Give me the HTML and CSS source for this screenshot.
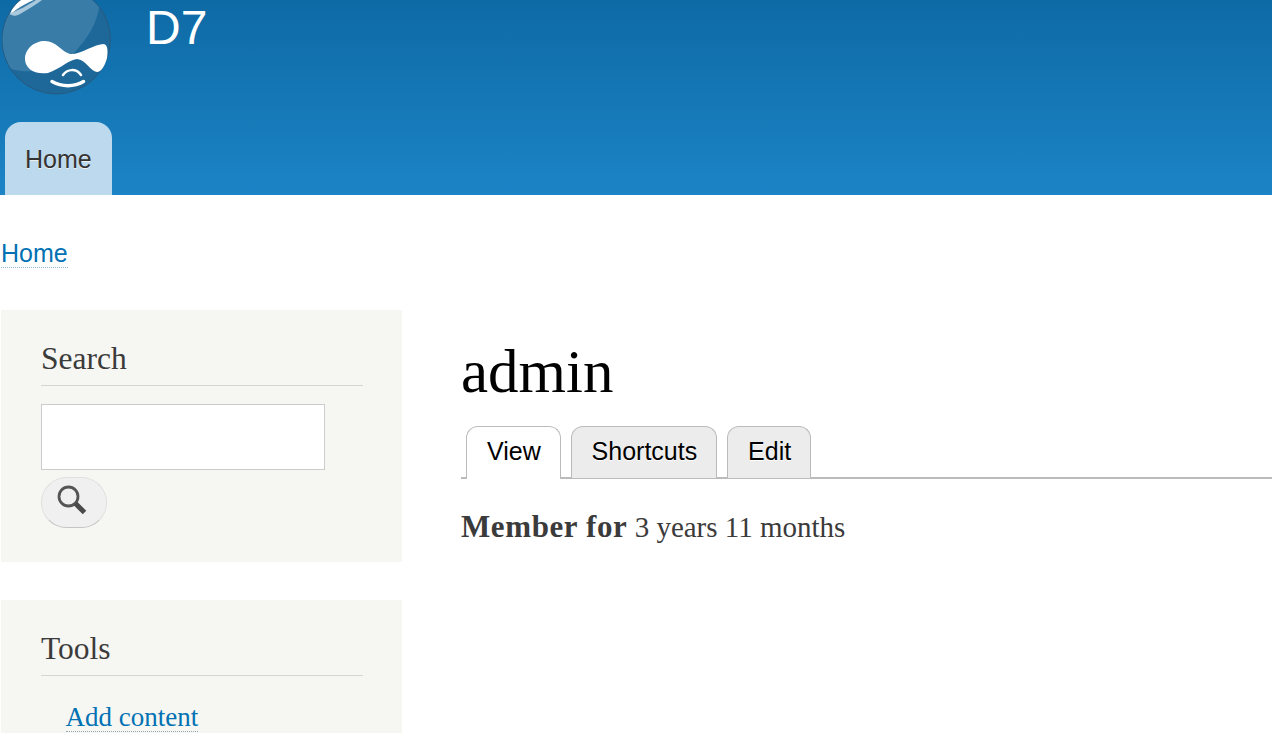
FILE: index.html
```html
<!DOCTYPE html>
<html lang="en">
<head>
  <meta charset="UTF-8">
  <title>admin | D7</title>
  <link rel="stylesheet" href="styles.css">
</head>
<body>
  <header class="site-header">
    <div class="branding">
      <svg class="logo" viewBox="0 0 112 96" width="112" height="96" aria-label="Home">
        <defs>
          <clipPath id="ball"><circle cx="56.200" cy="39.800" r="53.700"/></clipPath>
        </defs>
        <circle cx="56.200" cy="39.800" r="54.200" fill="#1d6898" stroke="#285a80" stroke-width="1"/>
        <g clip-path="url(#ball)">
          <path d="M-2 -20H100C102 12 96 30 72 55C56 69 30 76 8 68C-2 50 -4 20 -2 -20Z" fill="#387ca7"/>
          <path d="M10 15C18 7 32 0 44 -4L32 -6C22 -2 12 6 10 15Z" fill="#fff"/>
          <path d="M10 13C11 16 15 17 20 14C28 9 36 5 42 0L36 0C28 5 18 11 10 13Z" fill="#a9c8dc"/>
        </g>
        <path d="M25 59C25 49 34 41 45 41C56 41 62 52 70 54C80 55 94 44 104 44C108 45 108 52 107 58C105 66 101 72 97 72C90 71 86 60 77 59C68 60 62 68 48 73C34 75 25 68 25 59Z" fill="#fff"/>
        <path d="M52 81.500C62 87 74 87 83.500 81.500" fill="none" stroke="#fff" stroke-width="3.500" stroke-linecap="round"/>
        <path d="M63 75C67 69 76 68 81 75" fill="none" stroke="#fff" stroke-width="2.500" stroke-linecap="round"/>
      </svg>
      <div class="site-name">D7</div>
    </div>
    <nav class="main-menu">
      <a class="main-menu-item" href="#">Home</a>
    </nav>
  </header>

  <div class="breadcrumb"><a href="#">Home</a></div>

  <div class="columns">
    <aside class="sidebar">
      <section class="block block-search">
        <h2>Search</h2>
        <input class="search-input" type="text">
        <button class="search-btn" type="button" aria-label="Search">
          <svg viewBox="0 0 30 30" width="30" height="30">
            <circle cx="11.500" cy="11.500" r="9.500" fill="none" stroke="#555" stroke-width="2.800"/>
            <path d="M18.500 18.500L27.500 27.500" stroke="#4a4a4a" stroke-width="5"/>
          </svg>
        </button>
      </section>
      <section class="block block-tools">
        <h2>Tools</h2>
        <ul class="tools-menu">
          <li><a href="#">Add content</a></li>
        </ul>
      </section>
    </aside>

    <main class="content">
      <h1>admin</h1>
      <ul class="tabs">
        <li><a class="tab active" href="#">View</a></li>
        <li><a class="tab" href="#">Shortcuts</a></li>
        <li><a class="tab" href="#">Edit</a></li>
      </ul>
      <p class="member"><strong>Member for</strong> 3 years 11 months</p>
    </main>
  </div>
</body>
</html>
```

FILE: styles.css
```css
html, body {
  height: 100%;
}
body {
  margin: 0;
  overflow: hidden;
  background-color: #fff;
  color: #3b3b3b;
  font-family: "Liberation Serif", serif;
}
a {
  text-decoration: none;
}

.site-header {
  height: 195px;
  background: linear-gradient(to bottom, #0e6aa5, #1c84c6);
  font-family: "Liberation Sans", sans-serif;
}
.branding {
  display: flex;
  height: 122px;
}
.logo {
  flex: none;
}
.site-name {
  margin-left: 34px;
  font-size: 48px;
  line-height: 56px;
  color: #fff;
}
.main-menu {
  display: flex;
  padding-left: 5px;
}
.main-menu-item {
  height: 73px;
  padding: 0 20px;
  border-radius: 16px 16px 0 0;
  background-color: #bcd9ed;
  color: #333;
  font-size: 25px;
  line-height: 74px;
  text-shadow: 0 1px #eee;
}

.breadcrumb {
  padding: 43px 0 0 1px;
  height: 72px;
  font-family: "Liberation Sans", sans-serif;
  font-size: 25px;
  line-height: 30px;
}
.breadcrumb a {
  color: #0071b3;
  border-bottom: 1px dotted #8fb9d3;
}

.columns {
  display: flex;
  padding-left: 1px;
}
.sidebar {
  flex: none;
  width: 401px;
}
.block {
  box-sizing: border-box;
  padding: 30px 39px 0 40px;
  background-color: #f6f6f2;
}
.block-search {
  height: 252px;
  margin-bottom: 38px;
}
.block-tools {
  height: 133px;
}
.block h2 {
  margin: 0 0 18px;
  height: 45px;
  border-bottom: 1px solid #d6d6d0;
  font-size: 31.500px;
  font-weight: normal;
  line-height: 37px;
  color: #3b3b3b;
}
.search-input {
  display: block;
  box-sizing: border-box;
  width: 284px;
  height: 66px;
  padding: 0;
  border: 1px solid #ccc;
  background-color: #fff;
}
.search-btn {
  display: flex;
  align-items: center;
  justify-content: center;
  box-sizing: border-box;
  width: 66px;
  height: 51px;
  margin-top: 7px;
  padding: 0 4px 5px 0;
  border: 1px solid #e0e0e0;
  border-bottom-color: #c4c4c4;
  border-radius: 26px;
  background-color: #f0f0f0;
}
.tools-menu {
  margin: 0;
  padding: 10px 0 0 24.500px;
  list-style: none;
  font-size: 27px;
  line-height: 27px;
}
.tools-menu a {
  display: inline-block;
  color: #0071b3;
  border-bottom: 1px dotted #8fa9b8;
}

.content {
  flex: 1;
  margin-left: 59px;
}
.content h1 {
  margin: 26px 0 0;
  font-size: 61px;
  font-weight: normal;
  line-height: 72px;
  color: #000;
}
.tabs {
  display: flex;
  gap: 9.850px;
  margin: 18px 0 0;
  padding: 0 0 0 5px;
  height: 51px;
  border-bottom: 2px solid #bbb;
  list-style: none;
  font-family: "Liberation Sans", sans-serif;
  font-size: 25px;
}
.tab {
  display: block;
  box-sizing: border-box;
  height: 52px;
  padding: 0 19px 0 20px;
  border: 1px solid #bbb;
  border-bottom: none;
  border-radius: 12px 12px 0 0;
  background-color: #ececec;
  color: #000;
  line-height: 48px;
  text-shadow: 0 1px #fff;
}
.tab.active {
  height: 53px;
  background-color: #fff;
}
.member {
  margin: 28px 0 0;
  font-size: 29px;
  line-height: 40px;
  color: #3b3b3b;
}
.member strong {
  font-size: 31px;
  letter-spacing: 0.600px;
}
```
